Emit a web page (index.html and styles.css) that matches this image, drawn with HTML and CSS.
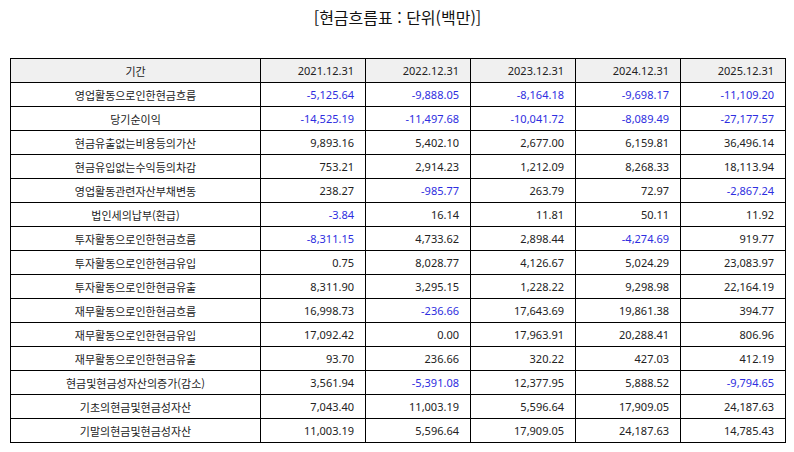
FILE: index.html
```html
<!DOCTYPE html>
<html lang="ko">
<head>
<meta charset="utf-8">
<title>현금흐름표</title>
<link rel="stylesheet" href="styles.css">
</head>
<body>
<div class="page">
  <h1 class="title">[현금흐름표 : 단위(백만)]</h1>
  <table class="cf">
    <colgroup>
      <col class="c-label"><col class="c-num"><col class="c-num"><col class="c-num"><col class="c-num"><col class="c-num">
    </colgroup>
    <thead>
      <tr><th class="lbl">기간</th><th>2021.12.31</th><th>2022.12.31</th><th>2023.12.31</th><th>2024.12.31</th><th>2025.12.31</th></tr>
    </thead>
    <tbody>
      <tr><td class="lbl">영업활동으로인한현금흐름</td><td class="neg">-5,125.64</td><td class="neg">-9,888.05</td><td class="neg">-8,164.18</td><td class="neg">-9,698.17</td><td class="neg">-11,109.20</td></tr>
      <tr><td class="lbl">당기순이익</td><td class="neg">-14,525.19</td><td class="neg">-11,497.68</td><td class="neg">-10,041.72</td><td class="neg">-8,089.49</td><td class="neg">-27,177.57</td></tr>
      <tr><td class="lbl">현금유출없는비용등의가산</td><td>9,893.16</td><td>5,402.10</td><td>2,677.00</td><td>6,159.81</td><td>36,496.14</td></tr>
      <tr><td class="lbl">현금유입없는수익등의차감</td><td>753.21</td><td>2,914.23</td><td>1,212.09</td><td>8,268.33</td><td>18,113.94</td></tr>
      <tr><td class="lbl">영업활동관련자산부채변동</td><td>238.27</td><td class="neg">-985.77</td><td>263.79</td><td>72.97</td><td class="neg">-2,867.24</td></tr>
      <tr><td class="lbl">법인세의납부(환급)</td><td class="neg">-3.84</td><td>16.14</td><td>11.81</td><td>50.11</td><td>11.92</td></tr>
      <tr><td class="lbl">투자활동으로인한현금흐름</td><td class="neg">-8,311.15</td><td>4,733.62</td><td>2,898.44</td><td class="neg">-4,274.69</td><td>919.77</td></tr>
      <tr><td class="lbl">투자활동으로인한현금유입</td><td>0.75</td><td>8,028.77</td><td>4,126.67</td><td>5,024.29</td><td>23,083.97</td></tr>
      <tr><td class="lbl">투자활동으로인한현금유출</td><td>8,311.90</td><td>3,295.15</td><td>1,228.22</td><td>9,298.98</td><td>22,164.19</td></tr>
      <tr><td class="lbl">재무활동으로인한현금흐름</td><td>16,998.73</td><td class="neg">-236.66</td><td>17,643.69</td><td>19,861.38</td><td>394.77</td></tr>
      <tr><td class="lbl">재무활동으로인한현금유입</td><td>17,092.42</td><td>0.00</td><td>17,963.91</td><td>20,288.41</td><td>806.96</td></tr>
      <tr><td class="lbl">재무활동으로인한현금유출</td><td>93.70</td><td>236.66</td><td>320.22</td><td>427.03</td><td>412.19</td></tr>
      <tr><td class="lbl">현금및현금성자산의증가(감소)</td><td>3,561.94</td><td class="neg">-5,391.08</td><td>12,377.95</td><td>5,888.52</td><td class="neg">-9,794.65</td></tr>
      <tr><td class="lbl">기초의현금및현금성자산</td><td>7,043.40</td><td>11,003.19</td><td>5,596.64</td><td>17,909.05</td><td>24,187.63</td></tr>
      <tr><td class="lbl">기말의현금및현금성자산</td><td>11,003.19</td><td>5,596.64</td><td>17,909.05</td><td>24,187.63</td><td>14,785.43</td></tr>
    </tbody>
  </table>
</div>
</body>
</html>
```
FILE: styles.css
```css
html, body {
  margin: 0;
  padding: 0;
  background: #ffffff;
}
body {
  font-family: "Noto Sans", "Noto Sans CJK KR", sans-serif;
  color: #222222;
}
.page {
  width: 794px;
  padding: 0 9px 0 10px;
  box-sizing: border-box;
}
.title {
  margin: 0;
  padding-top: 4px;
  height: 58px;
  box-sizing: border-box;
  font-family: "Noto Sans CJK KR", sans-serif;
  font-weight: 400;
  font-size: 16px;
  line-height: 26px;
  text-align: center;
  color: #111111;
}
.cf {
  width: 776px;
  border-collapse: collapse;
  table-layout: fixed;
  font-size: 11px;
}
.c-label { width: 250px; }
.c-num { width: 105px; }
.cf tr {
  height: 24px;
}
.cf th,
.cf td {
  border: 1px solid #000000;
  padding: 0 11px 0 4px;
  text-align: right;
  font-weight: 400;
  white-space: nowrap;
  line-height: 14px;
}
.cf thead th {
  background: #f0f0f0;
}
.cf .lbl {
  text-align: center;
  padding: 0 4px;
  font-family: "Noto Sans CJK KR", sans-serif;
}
.cf .neg {
  color: #2e2ee0;
}
```
